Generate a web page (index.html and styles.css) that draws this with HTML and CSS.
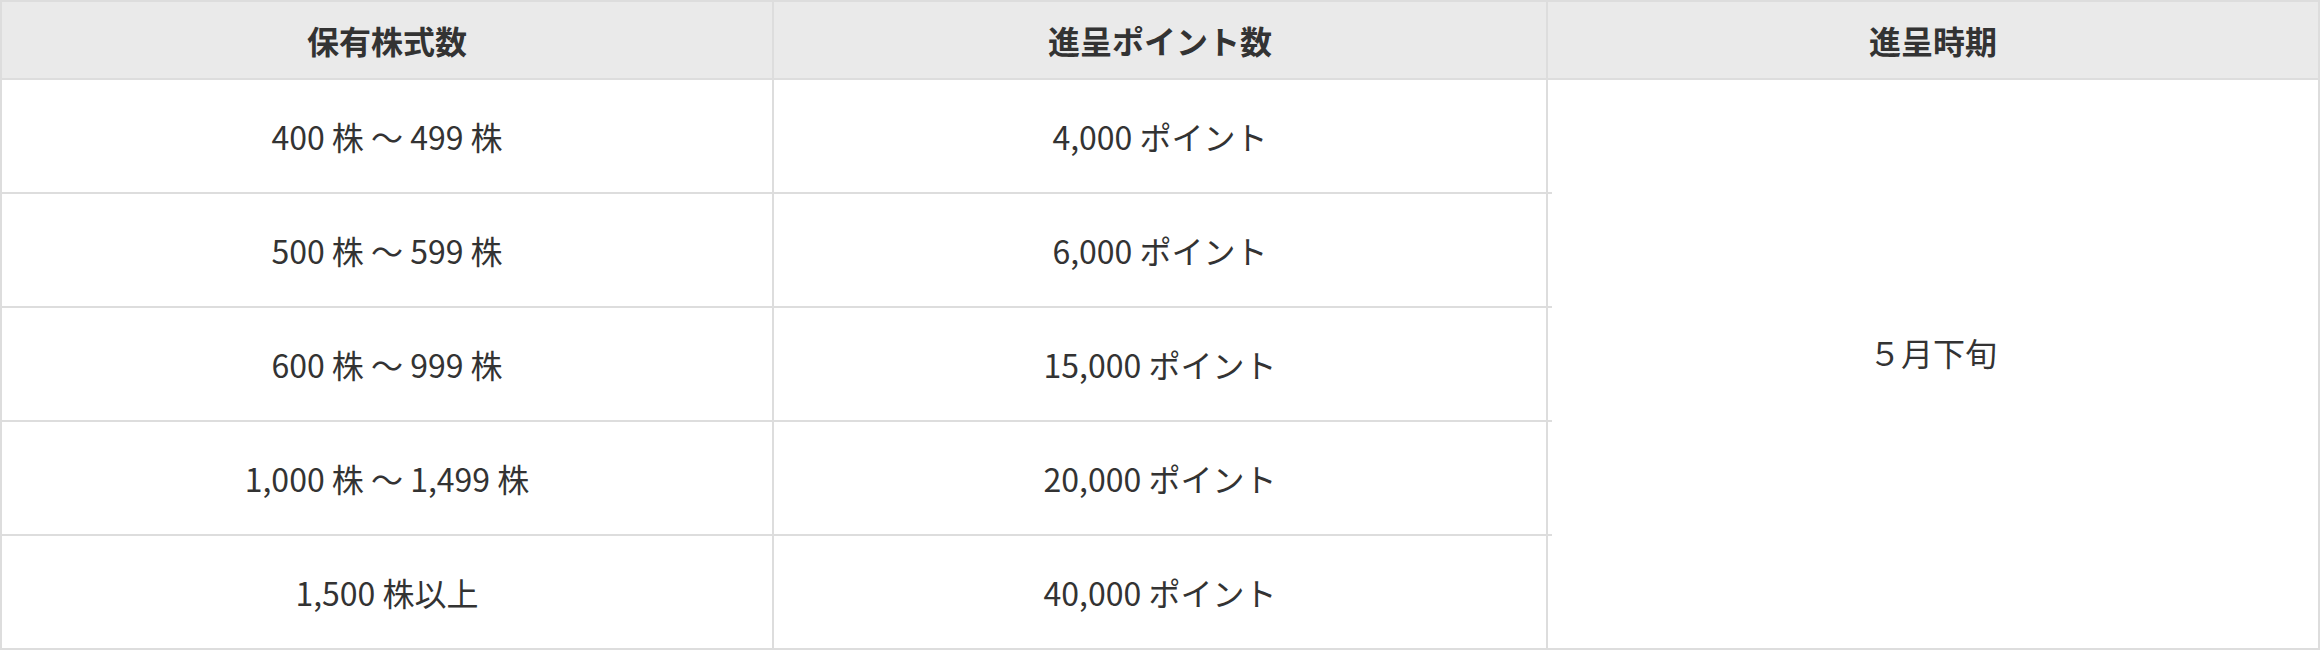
FILE: index.html
```html
<!DOCTYPE html>
<html lang="ja">
<head>
<meta charset="utf-8">
<link rel="stylesheet" href="styles.css">
</head>
<body>
<table class="benefit">
  <colgroup>
    <col class="c1"><col class="c2"><col class="c3">
  </colgroup>
  <thead>
    <tr>
      <th>保有株式数</th>
      <th>進呈ポイント数</th>
      <th>進呈時期</th>
    </tr>
  </thead>
  <tbody>
    <tr>
      <td>400 株 〜 499 株</td>
      <td class="pt">4,000 ポイント</td>
      <td class="when" rowspan="5">５月下旬</td>
    </tr>
    <tr>
      <td>500 株 〜 599 株</td>
      <td class="pt">6,000 ポイント</td>
    </tr>
    <tr>
      <td>600 株 〜 999 株</td>
      <td class="pt">15,000 ポイント</td>
    </tr>
    <tr>
      <td>1,000 株 〜 1,499 株</td>
      <td class="pt">20,000 ポイント</td>
    </tr>
    <tr>
      <td>1,500 株以上</td>
      <td class="pt last">40,000 ポイント</td>
    </tr>
  </tbody>
</table>
</body>
</html>
```

FILE: styles.css
```css
html, body {
  margin: 0;
  padding: 0;
  background: #fff;
}

body {
  font-family: "Noto Sans CJK JP", "Noto Sans", sans-serif;
  color: #333;
}

.benefit {
  width: 2320px;
  table-layout: fixed;
  border-collapse: separate;
  border-spacing: 0;
  border-top: 2px solid #dddddd;
  border-left: 2px solid #dddddd;
}

.c1 { width: 772px; }
.c2 { width: 774px; }
.c3 { width: 772px; }

.benefit th,
.benefit td {
  border-right: 2px solid #dddddd;
  border-bottom: 2px solid #dddddd;
  padding: 0;
  text-align: center;
  vertical-align: middle;
  font-size: 32px;
  line-height: 1.45;
}

.benefit th {
  height: 76px;
  background: #eaeaea;
  font-weight: 700;
}

.benefit td {
  height: 112px;
  font-weight: 400;
}

.benefit td.when {
  padding-bottom: 24px;
}

.benefit td.pt {
  position: relative;
}

.benefit td.pt::after {
  content: "";
  position: absolute;
  right: -6px;
  bottom: -2px;
  width: 4px;
  height: 2px;
  background: #dddddd;
}

.benefit td.pt.last::after {
  display: none;
}
```
